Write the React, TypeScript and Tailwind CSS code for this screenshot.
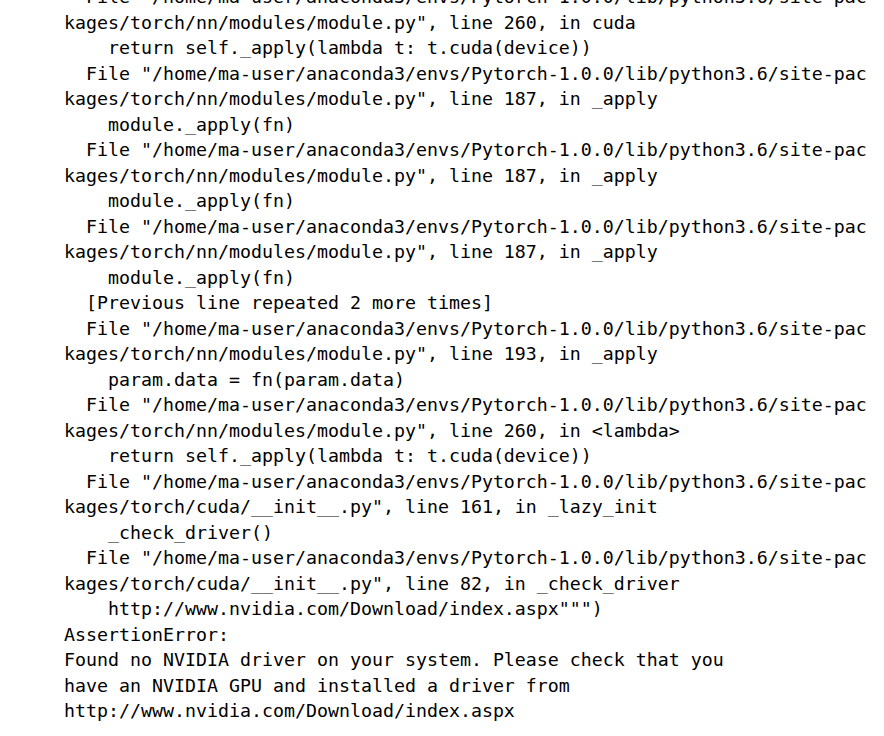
const lines = [
  '  File "/home/ma-user/anaconda3/envs/Pytorch-1.0.0/lib/python3.6/site-pac',
  'kages/torch/nn/modules/module.py", line 260, in cuda',
  '    return self._apply(lambda t: t.cuda(device))',
  '  File "/home/ma-user/anaconda3/envs/Pytorch-1.0.0/lib/python3.6/site-pac',
  'kages/torch/nn/modules/module.py", line 187, in _apply',
  '    module._apply(fn)',
  '  File "/home/ma-user/anaconda3/envs/Pytorch-1.0.0/lib/python3.6/site-pac',
  'kages/torch/nn/modules/module.py", line 187, in _apply',
  '    module._apply(fn)',
  '  File "/home/ma-user/anaconda3/envs/Pytorch-1.0.0/lib/python3.6/site-pac',
  'kages/torch/nn/modules/module.py", line 187, in _apply',
  '    module._apply(fn)',
  '  [Previous line repeated 2 more times]',
  '  File "/home/ma-user/anaconda3/envs/Pytorch-1.0.0/lib/python3.6/site-pac',
  'kages/torch/nn/modules/module.py", line 193, in _apply',
  '    param.data = fn(param.data)',
  '  File "/home/ma-user/anaconda3/envs/Pytorch-1.0.0/lib/python3.6/site-pac',
  'kages/torch/nn/modules/module.py", line 260, in <lambda>',
  '    return self._apply(lambda t: t.cuda(device))',
  '  File "/home/ma-user/anaconda3/envs/Pytorch-1.0.0/lib/python3.6/site-pac',
  'kages/torch/cuda/__init__.py", line 161, in _lazy_init',
  '    _check_driver()',
  '  File "/home/ma-user/anaconda3/envs/Pytorch-1.0.0/lib/python3.6/site-pac',
  'kages/torch/cuda/__init__.py", line 82, in _check_driver',
  '    http://www.nvidia.com/Download/index.aspx""")',
  'AssertionError:',
  'Found no NVIDIA driver on your system. Please check that you',
  'have an NVIDIA GPU and installed a driver from',
  'http://www.nvidia.com/Download/index.aspx',
];

export default function App() {
  return (
    <div className="h-[736px] w-[884px] overflow-hidden bg-white">
      <pre className="-mt-[16px] pl-[64px] font-['DejaVu_Sans_Mono',monospace] text-[18.27px] leading-[25.52px] text-black whitespace-pre">
        {lines.join('\n')}
      </pre>
    </div>
  );
}
